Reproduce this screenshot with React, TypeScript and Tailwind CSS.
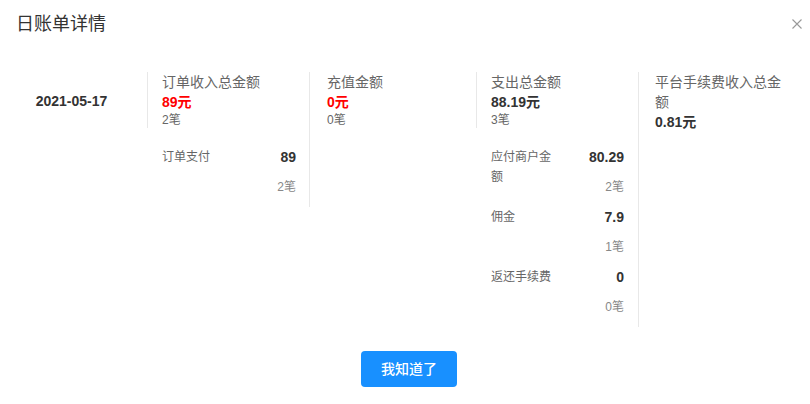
import React from "react";

type Detail = {
  label: string;
  value: string;
  count: string;
};

type Col = {
  title: string;
  amount: string;
  red?: boolean;
  count?: string;
  details?: Detail[];
};

const FONT = "font-['Liberation_Sans','Noto_Sans_CJK_SC',sans-serif]";

function Header({ col }: { col: Col }) {
  return (
    <div>
      <div className="text-sm leading-5 text-[#666]">{col.title}</div>
      <div
        className={
          col.red
            ? "text-sm font-bold leading-5 text-[#f00]"
            : "text-sm font-bold leading-5 text-[#333]"
        }
      >
        {col.amount}
      </div>
      {col.count && (
        <div className="text-xs leading-4 text-[#666]">{col.count}</div>
      )}
    </div>
  );
}

function Details({ items }: { items: Detail[] }) {
  return (
    <div className="mt-[19px]">
      {items.map((d) => (
        <div key={d.label} className="mb-[10px] flex justify-between">
          <div className="w-[64px] text-xs leading-5 text-[#666]">
            {d.label}
          </div>
          <div className="text-right">
            <div className="text-sm font-bold leading-5 text-[#333]">
              {d.value}
            </div>
            <div className="mt-[10px] text-xs leading-5 text-[#888]">
              {d.count}
            </div>
          </div>
        </div>
      ))}
    </div>
  );
}

const income: Col = {
  title: "订单收入总金额",
  amount: "89元",
  red: true,
  count: "2笔",
  details: [{ label: "订单支付", value: "89", count: "2笔" }],
};

const recharge: Col = {
  title: "充值金额",
  amount: "0元",
  red: true,
  count: "0笔",
};

const expense: Col = {
  title: "支出总金额",
  amount: "88.19元",
  count: "3笔",
  details: [
    { label: "应付商户金额", value: "80.29", count: "2笔" },
    { label: "佣金", value: "7.9", count: "1笔" },
    { label: "返还手续费", value: "0", count: "0笔" },
  ],
};

const platform: Col = {
  title: "平台手续费收入总金额",
  amount: "0.81元",
};

export default function App() {
  return (
    <div className={`h-[404px] w-[810px] bg-white ${FONT}`}>
      <div className="flex items-center justify-between pl-4 pr-2 pt-3">
        <div className="text-[18px] leading-6 text-[#333]">日账单详情</div>
        <svg width="10" height="10" viewBox="0 0 10 10">
          <path d="M0.5 0.5L9.5 9.5M9.5 0.5L0.5 9.5" stroke="#999" strokeWidth="1.1" />
        </svg>
      </div>

      <div className="mt-9 flex items-start">
        <div className="flex h-[57px] w-[147px] items-center justify-center pr-1 text-sm font-bold text-[#333]">
          2021-05-17
        </div>

        <div className="w-[163px] border-r border-[#e8e8e8]">
          <div className="border-l border-[#e8e8e8] pl-[14px]">
            <Header col={income} />
          </div>
          <div className="pl-[15px] pr-[13px]">
            <Details items={income.details!} />
          </div>
        </div>

        <div className="w-[166px] pl-[17px]">
          <Header col={recharge} />
        </div>

        <div className="w-[163px] border-r border-[#e8e8e8]">
          <div className="border-l border-[#e8e8e8] pl-[14px]">
            <Header col={expense} />
          </div>
          <div className="pl-[15px] pr-[14px]">
            <Details items={expense.details!} />
          </div>
        </div>

        <div className="w-[163px] pl-4 pr-[15px]">
          <Header col={platform} />
        </div>
      </div>

      <div className="mt-6 flex justify-center pl-2">
        <button className="h-9 w-24 rounded bg-[#1890ff] text-sm font-medium text-white">
          我知道了
        </button>
      </div>
    </div>
  );
}
